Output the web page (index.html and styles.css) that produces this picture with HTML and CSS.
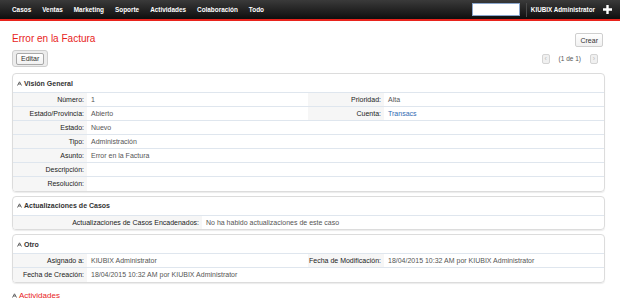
FILE: index.html
```html
<!DOCTYPE html>
<html lang="es">
<head>
  <meta charset="UTF-8"/>
  <title>Error en la Factura</title>
  <link rel="stylesheet" href="styles.css">
</head>
<body>
<div class="topbar">
  <nav class="nav">
    <a href="#">Casos</a><a href="#">Ventas</a><a href="#">Marketing</a><a href="#">Soporte</a>
    <a href="#">Actividades</a><a href="#">Colaboración</a><a href="#">Todo</a>
  </nav>
  <input class="search" type="text"/>
  <span class="sep"></span>
  <span class="user">KIUBIX Administrator</span>
  <svg class="plus" width="9" height="9" viewBox="0 0 9 9"><path d="M3.3 0h2.4v3.3H9v2.4H5.7V9H3.3V5.7H0V3.3h3.3z" fill="#fff"/></svg>
</div>

<div class="page">
  <div class="title-row">
    <h1>Error en la Factura</h1>
    <button class="btn">Crear</button>
  </div>

  <div class="toolbar">
    <div class="btn-group"><button class="btn">Editar</button></div>
    <div class="pager">
      <span class="pg-btn">&lsaquo;</span>
      <span>(1 de 1)</span>
      <span class="pg-btn">&rsaquo;</span>
    </div>
  </div>

  <!-- Vision general -->
  <div class="panel">
    <div class="panel-head"><svg class="caret" width="5" height="5" viewBox="0 0 5 5"><path d="M0.5 4.5L2.5 0.8L4.5 4.5M1.3 3h2.4" fill="none" stroke="#555" stroke-width="0.9"/></svg>Visión General</div>
    <table class="detail">
      <colgroup><col class="c-l1"/><col class="c-v1"/><col class="c-l2"/><col/></colgroup>
      <tr><th>Número:</th><td>1</td><th>Prioridad:</th><td>Alta</td></tr>
      <tr><th>Estado/Provincia:</th><td>Abierto</td><th>Cuenta:</th><td><a href="#">Transacs</a></td></tr>
      <tr><th>Estado:</th><td>Nuevo</td><td></td><td></td></tr>
      <tr><th>Tipo:</th><td>Administración</td><td></td><td></td></tr>
      <tr><th>Asunto:</th><td>Error en la Factura</td><td></td><td></td></tr>
      <tr><th>Descripción:</th><td></td><td></td><td></td></tr>
      <tr><th>Resolución:</th><td></td><td></td><td></td></tr>
    </table>
  </div>

  <!-- Actualizaciones -->
  <div class="panel">
    <div class="panel-head"><svg class="caret" width="5" height="5" viewBox="0 0 5 5"><path d="M0.5 4.5L2.5 0.8L4.5 4.5M1.3 3h2.4" fill="none" stroke="#555" stroke-width="0.9"/></svg>Actualizaciones de Casos</div>
    <table class="detail">
      <colgroup><col class="c-wide"/><col/></colgroup>
      <tr><th>Actualizaciones de Casos Encadenados:</th><td>No ha habido actualizaciones de este caso</td></tr>
    </table>
  </div>

  <!-- Otro -->
  <div class="panel">
    <div class="panel-head"><svg class="caret" width="5" height="5" viewBox="0 0 5 5"><path d="M0.5 4.5L2.5 0.8L4.5 4.5M1.3 3h2.4" fill="none" stroke="#555" stroke-width="0.9"/></svg>Otro</div>
    <table class="detail">
      <colgroup><col class="c-l1"/><col class="c-v1"/><col class="c-l2"/><col/></colgroup>
      <tr><th>Asignado a:</th><td>KIUBIX Administrator</td><th>Fecha de Modificación:</th><td>18/04/2015 10:32 AM por KIUBIX Administrator</td></tr>
      <tr><th>Fecha de Creación:</th><td>18/04/2015 10:32 AM por KIUBIX Administrator</td><td></td><td></td></tr>
    </table>
  </div>

  <div class="subpanel"><svg class="caret" width="5" height="5" viewBox="0 0 5 5"><path d="M0.5 4.5L2.5 0.8L4.5 4.5M1.3 3h2.4" fill="none" stroke="#555" stroke-width="0.9"/></svg>Actividades</div>
</div>
</body>
</html>
```

FILE: styles.css
```css
*{box-sizing:border-box}
body{margin:0;font-family:"Liberation Sans",Arial,sans-serif;font-size:7px;color:#555;background:#fff}

/* top navigation */
.topbar{display:flex;align-items:center;height:21px;padding:0 8px 0 12px;background:linear-gradient(#3a3a3a,#0e0e0e);border-bottom:2px solid #e8231c}
.nav{display:flex;gap:11px;font-size:6.4px}
.nav a{color:#fff;font-weight:bold;text-decoration:none}
.search{margin-left:auto;width:48px;height:13px;padding:0;border:1px solid #8aa6cc;background:#fff}
.sep{width:1px;height:14px;margin:0 4px 0 6px;background:#4a4a4a}
.user{color:#fff;font-weight:bold;font-size:6.3px}
.plus{margin-left:8px}

/* page */
.page{padding:0 15px 0 12px}
.title-row{display:flex;justify-content:space-between;align-items:flex-start;margin-top:12px;height:14px}
h1{margin:0;font-size:10px;line-height:11px;font-weight:normal;color:#e8231c}
.btn{height:14px;padding:0 4px;border:1px solid #cfcfcf;border-radius:2px;background:linear-gradient(#fff,#f1f1f1);font:7px "Liberation Sans",Arial,sans-serif;color:#333;margin-right:2px}
.toolbar{display:flex;justify-content:space-between;align-items:center;margin-top:3px}
.btn-group{display:flex;align-items:center;height:17px;padding:0 3px;border:1px solid #cfcfcf;border-radius:3px;background:#ececec}
.btn-group .btn{height:12px;margin:0;border-color:#a9a9a9}
.pager{display:flex;align-items:center;gap:9px;margin-right:7px;color:#555;font-size:6.5px}
.pg-btn{display:flex;align-items:center;justify-content:center;width:8px;height:10px;border:1px solid #d4d4d4;border-radius:2px;background:#f0f0f0;color:#bbb;font-size:7px}

/* panels */
.panel{border:1px solid #dcdcdc;border-radius:4px;box-shadow:0 1px 1px rgba(0,0,0,.08);overflow:hidden}
.toolbar + .panel{margin-top:6px}
.panel + .panel{margin-top:4px}
.panel-head{display:flex;align-items:center;gap:2px;height:18px;padding-left:4px;font-weight:bold;color:#333}
.caret{flex:none}
.detail{width:100%;border-collapse:collapse;table-layout:fixed}
.detail tr{height:14px}
.detail th,.detail td{padding:0;border-top:1px solid #dfe6ee;white-space:nowrap;overflow:hidden}
.detail th{padding-right:3px;text-align:right;font-weight:normal;color:#222;background:#f6f6f6}
.detail td{padding-left:4px}
.detail a{color:#2f69b3;text-decoration:none}
.c-l1{width:74px}
.c-v1{width:221px}
.c-l2{width:76px}
.c-wide{width:189px}

.subpanel{display:flex;align-items:center;gap:2px;margin-top:8px;font-size:8px;color:#e8231c}
```
